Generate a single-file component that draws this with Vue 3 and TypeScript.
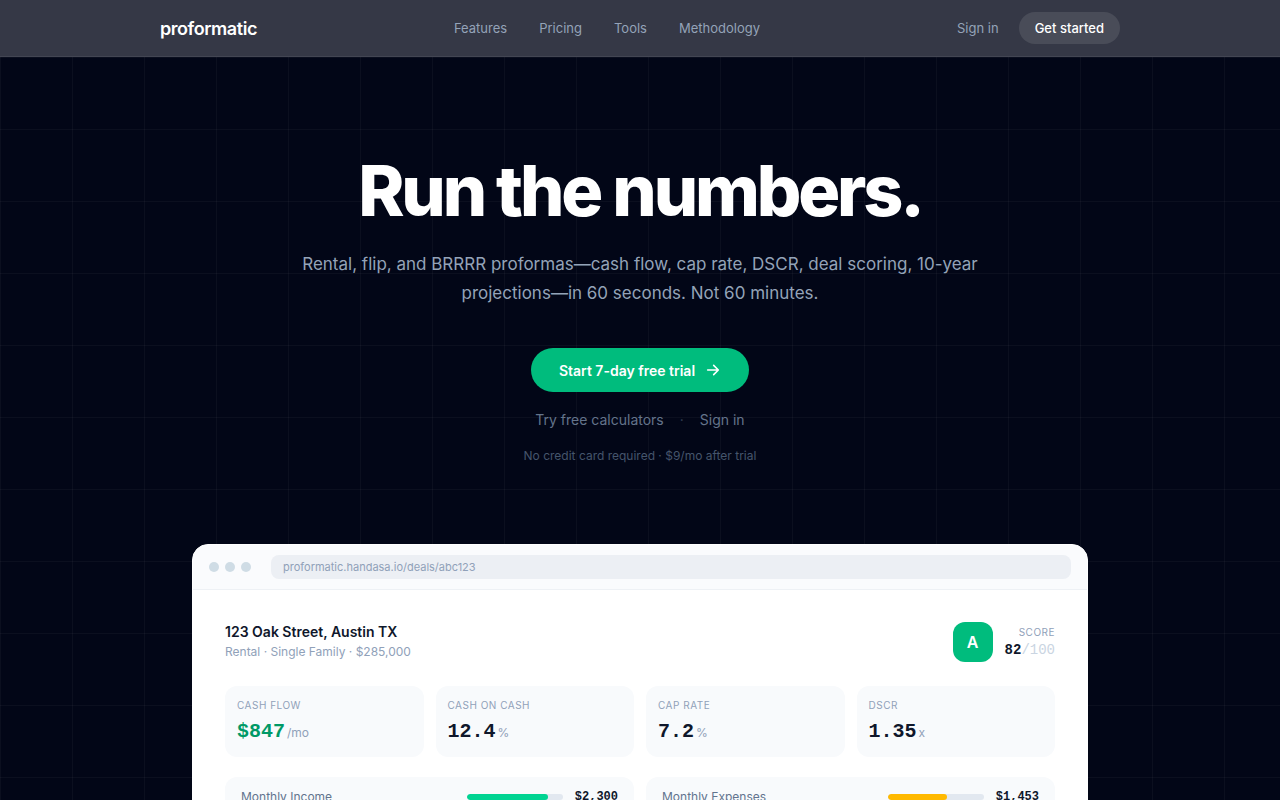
<script setup lang="ts">
interface Metric {
  label: string
  value: string
  unit: string
  positive?: boolean
}

interface Flow {
  label: string
  amount: string
  percent: number
  tone: 'income' | 'expense'
}

const navLinks: string[] = ['Features', 'Pricing', 'Tools', 'Methodology']

const metrics: Metric[] = [
  { label: 'Cash flow', value: '$847', unit: '/mo', positive: true },
  { label: 'Cash on cash', value: '12.4', unit: '%' },
  { label: 'Cap rate', value: '7.2', unit: '%' },
  { label: 'DSCR', value: '1.35', unit: 'x' },
]

const flows: Flow[] = [
  { label: 'Monthly Income', amount: '$2,300', percent: 85, tone: 'income' },
  { label: 'Monthly Expenses', amount: '$1,453', percent: 62, tone: 'expense' },
]
</script>

<template>
  <div class="page">
    <header class="nav">
      <div class="nav-inner">
        <a class="logo" href="#">proformatic</a>
        <nav class="nav-links" aria-label="Main">
          <a v-for="link in navLinks" :key="link" href="#">{{ link }}</a>
        </nav>
        <div class="nav-actions">
          <a href="#">Sign in</a>
          <a class="pill" href="#">Get started</a>
        </div>
      </div>
    </header>

    <main class="hero">
      <h1>Run the numbers.</h1>
      <p class="lead">
        Rental, flip, and BRRRR proformas—cash flow, cap rate, DSCR, deal scoring, 10-year
        projections—in 60 seconds. Not 60 minutes.
      </p>
      <a class="cta" href="#">
        Start 7-day free trial
        <svg width="16" height="16" viewBox="0 0 24 24" fill="none" stroke="currentColor" stroke-width="2.4" stroke-linecap="round" stroke-linejoin="round" aria-hidden="true">
          <path d="M4 12h16M13 5l7 7-7 7" />
        </svg>
      </a>
      <div class="alt-links">
        <a href="#">Try free calculators</a>
        <span class="dot-sep">·</span>
        <a href="#">Sign in</a>
      </div>
      <p class="note">No credit card required · $9/mo after trial</p>

      <section class="window" aria-label="Deal preview">
        <div class="window-bar">
          <div class="lights"><i></i><i></i><i></i></div>
          <div class="url">proformatic.handasa.io/deals/abc123</div>
        </div>
        <div class="window-body">
          <div class="deal-head">
            <div>
              <h2>123 Oak Street, Austin TX</h2>
              <p class="deal-meta">Rental · Single Family · $285,000</p>
            </div>
            <div class="score">
              <span class="grade">A</span>
              <div class="score-text">
                <div class="label">Score</div>
                <div class="score-value">82<span>/100</span></div>
              </div>
            </div>
          </div>

          <div class="metrics">
            <div v-for="m in metrics" :key="m.label" class="metric">
              <div class="label">{{ m.label }}</div>
              <div class="metric-value" :class="{ positive: m.positive }">
                {{ m.value }}<span>{{ m.unit }}</span>
              </div>
            </div>
          </div>

          <div class="flows">
            <div v-for="f in flows" :key="f.label" class="flow">
              <span class="flow-label">{{ f.label }}</span>
              <div class="track">
                <div class="fill" :class="f.tone" :style="{ width: f.percent + '%' }"></div>
              </div>
              <span class="flow-amount">{{ f.amount }}</span>
            </div>
          </div>
        </div>
      </section>
    </main>
  </div>
</template>

<style>
html,
body {
  background: #020617;
}
body {
  margin: 0;
}
</style>

<style scoped>
.page {
  min-height: 100vh;
  background: #020617;
  color: #fff;
  font-family: Inter, "Liberation Sans", sans-serif;
  -webkit-font-smoothing: antialiased;
}
a {
  color: inherit;
  text-decoration: none;
}
h1,
h2,
p {
  margin: 0;
}
.nav {
  background: #353846;
  border-bottom: 1px solid #434653;
}
.nav-inner {
  box-sizing: border-box;
  max-width: 1008px;
  height: 56px;
  margin: 0 auto;
  padding: 0 24px;
  display: flex;
  align-items: center;
  justify-content: space-between;
}
.logo {
  font-size: 18px;
  font-weight: 600;
  letter-spacing: -0.025em;
}
.nav-links {
  display: flex;
  gap: 32px;
  font-size: 13px;
  color: #94a3b8;
}
.nav-actions {
  display: flex;
  align-items: center;
  gap: 20px;
  font-size: 13px;
  color: #94a3b8;
}
.pill {
  padding: 0 16px;
  line-height: 32px;
  border-radius: 16px;
  background: #494c58;
  color: #fff;
  font-weight: 500;
}
.hero {
  display: flex;
  flex-direction: column;
  align-items: center;
  padding: 96px 24px 0;
  background-image:
    linear-gradient(to right, rgba(255, 255, 255, 0.035) 1px, transparent 1px),
    linear-gradient(to bottom, rgba(255, 255, 255, 0.035) 1px, transparent 1px);
  background-size: 72px 72px;
}
h1 {
  font-size: 70px;
  line-height: 76px;
  font-weight: 800;
  letter-spacing: -0.045em;
}
.lead {
  max-width: 700px;
  margin-top: 21px;
  font-size: 17px;
  line-height: 29px;
  text-align: center;
  color: #94a3b8;
}
.cta {
  display: flex;
  align-items: center;
  gap: 10px;
  height: 44px;
  margin-top: 40px;
  padding: 0 28px;
  border-radius: 22px;
  background: #00bc7d;
  font-size: 14px;
  font-weight: 600;
}
.alt-links {
  display: flex;
  gap: 16px;
  margin-top: 18px;
  font-size: 14px;
  line-height: 20px;
  color: #64748b;
}
.dot-sep {
  color: #334155;
}
.note {
  margin-top: 18px;
  font-size: 12px;
  line-height: 16px;
  color: #45556c;
}
.window {
  box-sizing: border-box;
  width: 100%;
  max-width: 896px;
  margin-top: 80px;
  border: 1px solid #fff;
  border-radius: 16px;
  overflow: hidden;
  background: #fff;
  color: #0f172b;
}
.window-bar {
  display: flex;
  align-items: center;
  gap: 20px;
  padding: 10px 16px;
  background: #fafbfd;
  border-bottom: 1px solid #eef1f5;
}
.lights {
  display: flex;
  gap: 6px;
}
.lights i {
  width: 10px;
  height: 10px;
  border-radius: 50%;
  background: #cfdce5;
}
.url {
  flex: 1;
  padding: 0 12px;
  border-radius: 8px;
  background: #eceff4;
  font-size: 11px;
  line-height: 24px;
  color: #90a1b9;
}
.window-body {
  padding: 32px;
}
.deal-head {
  display: flex;
  align-items: center;
  justify-content: space-between;
}
h2 {
  font-size: 14px;
  line-height: 20px;
  font-weight: 600;
}
.deal-meta {
  font-size: 12px;
  line-height: 20px;
  color: #90a1b9;
}
.score {
  display: flex;
  align-items: center;
  gap: 12px;
}
.grade {
  width: 40px;
  border-radius: 12px;
  background: #00bc7d;
  color: #fff;
  font-size: 16px;
  font-weight: 600;
  line-height: 40px;
  text-align: center;
}
.score-text {
  text-align: right;
}
.label {
  font-size: 10px;
  line-height: 15px;
  letter-spacing: 0.05em;
  text-transform: uppercase;
  color: #90a1b9;
}
.score-value {
  font-family: "Liberation Mono", monospace;
  font-size: 14px;
  line-height: 20px;
  font-weight: 700;
}
.score-value span {
  font-weight: 400;
  color: #cad5e2;
}
.metrics {
  display: grid;
  grid-template-columns: repeat(4, 1fr);
  gap: 12px;
  margin-top: 24px;
}
.metric {
  padding: 12px;
  border-radius: 12px;
  background: #f8fafc;
}
.metric-value {
  margin-top: 6px;
  font-family: "Liberation Mono", monospace;
  font-size: 20px;
  line-height: 26px;
  font-weight: 700;
}
.metric-value.positive {
  color: #009966;
}
.metric-value span {
  margin-left: 2px;
  font-family: Inter, "Liberation Sans", sans-serif;
  font-size: 12px;
  line-height: 12px;
  font-weight: 400;
  color: #90a1b9;
}
.flows {
  display: grid;
  grid-template-columns: repeat(2, 1fr);
  gap: 12px;
  margin-top: 20px;
}
.flow {
  display: flex;
  align-items: center;
  gap: 12px;
  padding: 10px 16px;
  border-radius: 12px;
  background: #f8fafc;
}
.flow-label {
  flex: 1;
  font-size: 12px;
  line-height: 20px;
  color: #62748e;
}
.track {
  width: 96px;
  height: 6px;
  border-radius: 3px;
  overflow: hidden;
  background: #e2e8f0;
}
.fill {
  height: 100%;
  border-radius: 3px;
}
.fill.income {
  background: #00d492;
}
.fill.expense {
  background: #ffb900;
}
.flow-amount {
  font-family: "Liberation Mono", monospace;
  font-size: 12px;
  font-weight: 700;
}
</style>
